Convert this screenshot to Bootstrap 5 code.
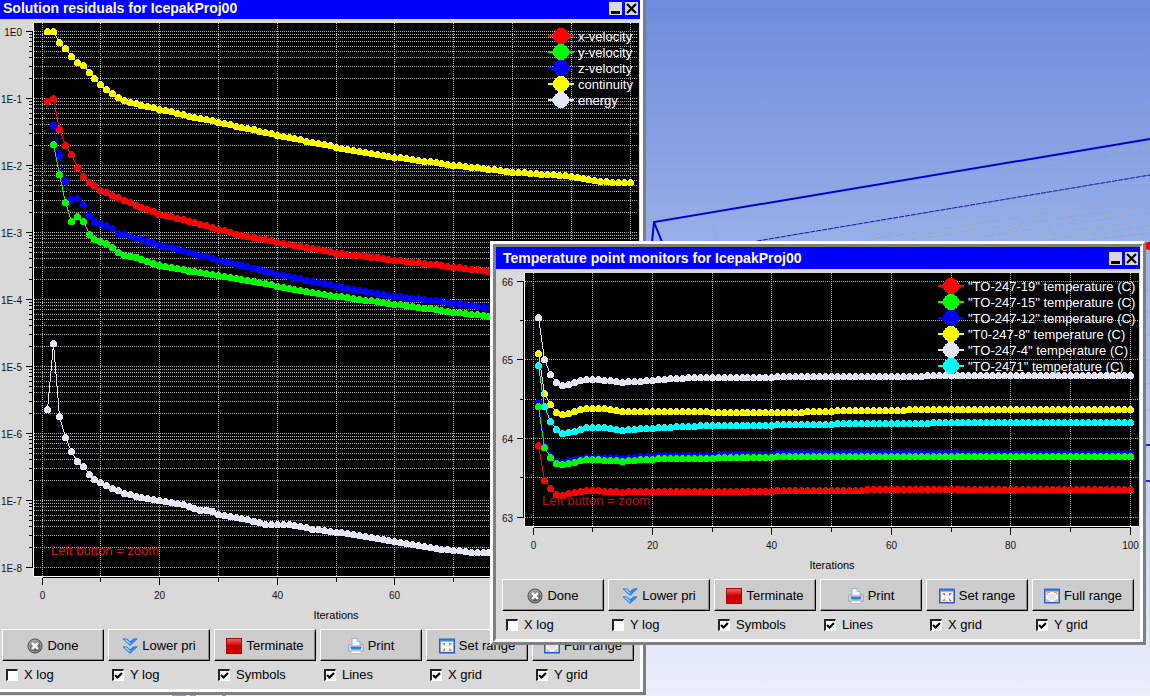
<!DOCTYPE html>
<html lang="en">
<head>
<meta charset="utf-8">
<meta name="viewport" content="width=device-width, initial-scale=1">
<title>Icepak solution monitors</title>
<link rel="stylesheet" href="https://cdn.jsdelivr.net/npm/bootstrap@5.3.0/dist/css/bootstrap.min.css">
<style>
  body { font-family: "Liberation Sans", Arial, sans-serif; font-size: 13px; line-height: 16px; color: #000; }
  .desk { min-height: 100vh; background: linear-gradient(#6c8cdc, #ecf0fb); }
  .desk-scene { inset: 0; }

  /* Raised frame: two nested 3px edges */
  .win { width: 656px; border: 3px solid; border-color: #fff #7f7f7f #7f7f7f #fff; }
  .win-inner { border: 3px solid; border-color: #7f7f7f #fff #fff #7f7f7f; background: #d9d9d9; }
  .win-residuals { left: -10px; top: -9px; }
  .win-temps { left: 490px; top: 241px; }

  .win-title { height: 22px; background: #00f; color: #fff; padding: 0 2px 0 7px; gap: 3px; }
  .win-title h1 { font-size: 14px; line-height: 22px; font-weight: 700; }
  .win-ctl { width: 13px; height: 13px; padding: 0; border: 0; background: #d9d9d9; }

  .tools { padding: 5px 6px 6px; }
  .tool-btn { height: 32px; gap: 4px; padding: 1px 0 0; border-radius: 0; font-size: 13px; line-height: 16px; color: #000;
    background: #ccc; border: 1px solid; border-color: #fff #000 #000 #fff; box-shadow: inset -1px -1px #8a8a8a; }
  .tool-btn:hover { background: #d4d4d4; color: #000; border-color: #fff #000 #000 #fff; }
  .opt { gap: 6px; padding: 6px 0 0 4px; }
  .opt input { appearance: none; margin: 0; width: 12px; height: 12px; background: #fff center / 9px 9px no-repeat;
    border: 1px solid; border-width: 2px 1px 1px 2px; border-color: #222 #fff #fff #222; }
  .opt input:checked { background-image: url("data:image/svg+xml,%3Csvg xmlns='http://www.w3.org/2000/svg' viewBox='0 0 9 9'%3E%3Cpath d='M1 4 3.500 6.500 8 2' fill='none' stroke='%23000' stroke-width='2.200'/%3E%3C/svg%3E"); }

  .plot line, .plot rect, .plot circle, .plot polyline { shape-rendering: crispEdges; }
  .plot .grid { stroke: #b0b0b0; stroke-dasharray: 1 1; }
  .plot .axis { stroke: #000; }
  .plot .tick-text { font: 10px "Liberation Sans", sans-serif; fill: #111; }
  .plot .axis-text { font: 11px "Liberation Sans", sans-serif; fill: #000; }
  .plot .key-text { font: 13px "Liberation Sans", sans-serif; fill: #fff; }
  .plot .hint { font: 13px "Liberation Sans", sans-serif; fill: #d8141e; }
  .win-temps .hint { fill: #b4101a; }
</style>
<script src="https://cdn.jsdelivr.net/npm/bootstrap@5.3.0/dist/js/bootstrap.bundle.min.js"></script>
</head>
<body>
<svg class="position-absolute" width="0" height="0" aria-hidden="true">
  <defs>
    <radialGradient id="gBall" cx=".4" cy=".3" r=".8"><stop offset="0" stop-color="#aaa"/><stop offset="1" stop-color="#3c3c3c"/></radialGradient>
    <linearGradient id="gStop" x2="0" y2="1"><stop offset="0" stop-color="#f06a6a"/><stop offset=".4" stop-color="#d81010"/><stop offset=".45" stop-color="#c00000"/><stop offset="1" stop-color="#e00000"/></linearGradient>
  </defs>
  <symbol id="iDone" viewBox="0 0 16 16"><circle cx="8" cy="8" r="7" fill="url(#gBall)" stroke="#444"/><circle cx="8" cy="8" r="6" fill="none" stroke="#bbb" stroke-width=".7"/><path d="M5 5l6 6M11 5l-6 6" stroke="#fff" stroke-width="2.4"/></symbol>
  <symbol id="iLower" viewBox="0 0 16 16"><g stroke="#2070e0" stroke-width=".8"><path d="M1 .8l4 .2 3 2.8 3.4-2.8 3.8-.2L8 7.400z" fill="#2b8cff"/><path d="M1 8.800l4 .2 3 2.8 3.400-2.800 3.800-.2L8 15.400z" fill="#2b8cff"/></g><path d="M2.500 1.500h2l3.500 3.500v1.200zM2.500 9.500h2l3.500 3.500v1.200z" fill="#c4e2ff"/></symbol>
  <symbol id="iStop" viewBox="0 0 16 16"><rect x=".5" y=".5" width="15" height="15" fill="url(#gStop)" stroke="#a00808"/></symbol>
  <symbol id="iPrint" viewBox="0 0 16 16"><path d="M4 7V.5h5L12 3.500V7" fill="#f2f8ff" stroke="#8fb4d8"/><path d="M9 .5v3h3" fill="#bcd8f4" stroke="#8fb4d8" stroke-width=".7"/><path d="M1 6.500h2v2h10v-2h2l.5 1.500v5H.5V8z" fill="#d8dce2" stroke="#98a0ac" stroke-width=".8"/><path d="M2.500 9h11l-1 2.500h-9z" fill="#1787ea"/><path d="M3 13h10v2.500H3z" fill="#fff" stroke="#a8b0bc" stroke-width=".7"/></symbol>
  <symbol id="iRange" viewBox="0 0 16 16"><rect x=".8" y="1.300" width="14.400" height="13.400" fill="#f6f9ff" stroke="#2458c8" stroke-width="1.500"/><path d="M1 2.500h14" stroke="#3c84f0" stroke-width="2"/></symbol>
  <symbol id="iSet" viewBox="0 0 16 16"><use href="#iRange"/><path d="M3 5h3v3zM13 5h-3v3zM3 13h3v-3zM13 13h-3v-3z" fill="#e07838"/></symbol>
  <symbol id="iFull" viewBox="0 0 16 16"><use href="#iRange"/><path d="M3 7V4.500h3M13 7V4.500h-3M3 11v2h3M13 11v2h-3" fill="none" stroke="#d89878"/><ellipse cx="8" cy="8.800" rx="4" ry="3.200" fill="#e4e4ec"/></symbol>
  <symbol id="iMin" viewBox="0 0 13 13"><path d="M2 10.500h9" stroke="#000" stroke-width="3"/></symbol>
  <symbol id="iClose" viewBox="0 0 13 13"><path d="M2 2l9 9M11 2l-9 9" stroke="#000" stroke-width="2.200"/></symbol>
</svg>

<main class="desk position-relative overflow-hidden">
  <svg class="desk-scene position-absolute w-100 h-100" viewBox="0 0 1150 696" preserveAspectRatio="xMinYMin slice" fill="none" aria-hidden="true">
    <g stroke="#a3a6bd" stroke-opacity=".7">
      <path d="M860 241L1150 198M900 241L1150 206M950 241L1150 213M1000 241L1150 220M1040 241L1150 226M1080 241L1150 233M1000 170L1150 146M712 222l6 19" stroke-dasharray="9 3"/>
      <path d="M1146 270h4M1146 290h4M1146 312h4M1146 335h4M1146 360h4M1146 384h4M1146 410h4"/>
    </g>
    <path d="M652 242l2-20L1150 139M654 222l8 20" stroke="#0000c8" stroke-width="2"/>
    <path d="M757 241L1150 175" stroke="#1414a0" stroke-dasharray="5 1"/>
    <path d="M1146 445h4M1146 481h4" stroke="#2828d0" stroke-width="2"/>
    <circle cx="1149" cy="246" r="4" fill="#f00"/>
    <path d="M172 695h14M190 695h6M222 695h4" stroke="#555"/>
  </svg>

  <section class="win win-residuals position-absolute" aria-labelledby="t1">
    <div class="win-inner">
      <header class="win-title d-flex align-items-center">
        <h1 id="t1" class="m-0 me-auto">Solution residuals for IcepakProj00</h1>
        <button class="win-ctl d-flex" type="button" aria-label="Minimize"><svg width="13" height="13"><use href="#iMin"/></svg></button>
        <button class="win-ctl d-flex" type="button" aria-label="Close"><svg width="13" height="13"><use href="#iClose"/></svg></button>
      </header>
      <svg id="residuals" class="plot d-block w-100" viewBox="-4 19 644 605" role="img" aria-label="Solution residuals"></svg>
      <div class="tools">
        <div class="row row-cols-6 g-1">
          <div class="col"><button type="button" class="btn tool-btn w-100 d-flex align-items-center justify-content-center"><svg width="16" height="16"><use href="#iDone"/></svg>Done</button></div>
          <div class="col"><button type="button" class="btn tool-btn w-100 d-flex align-items-center justify-content-center"><svg width="16" height="16"><use href="#iLower"/></svg>Lower pri</button></div>
          <div class="col"><button type="button" class="btn tool-btn w-100 d-flex align-items-center justify-content-center"><svg width="16" height="16"><use href="#iStop"/></svg>Terminate</button></div>
          <div class="col"><button type="button" class="btn tool-btn w-100 d-flex align-items-center justify-content-center"><svg width="16" height="16"><use href="#iPrint"/></svg>Print</button></div>
          <div class="col"><button type="button" class="btn tool-btn w-100 d-flex align-items-center justify-content-center"><svg width="16" height="16"><use href="#iSet"/></svg>Set range</button></div>
          <div class="col"><button type="button" class="btn tool-btn w-100 d-flex align-items-center justify-content-center"><svg width="16" height="16"><use href="#iFull"/></svg>Full range</button></div>
        </div>
        <div class="row row-cols-6 gx-1">
          <div class="col"><div class="opt d-flex align-items-center"><input type="checkbox" id="r1"><label for="r1">X log</label></div></div>
          <div class="col"><div class="opt d-flex align-items-center"><input type="checkbox" id="r2" checked><label for="r2">Y log</label></div></div>
          <div class="col"><div class="opt d-flex align-items-center"><input type="checkbox" id="r3" checked><label for="r3">Symbols</label></div></div>
          <div class="col"><div class="opt d-flex align-items-center"><input type="checkbox" id="r4" checked><label for="r4">Lines</label></div></div>
          <div class="col"><div class="opt d-flex align-items-center"><input type="checkbox" id="r5" checked><label for="r5">X grid</label></div></div>
          <div class="col"><div class="opt d-flex align-items-center"><input type="checkbox" id="r6" checked><label for="r6">Y grid</label></div></div>
        </div>
      </div>
    </div>
  </section>

  <section class="win win-temps position-absolute" aria-labelledby="t2">
    <div class="win-inner">
      <header class="win-title d-flex align-items-center">
        <h1 id="t2" class="m-0 me-auto">Temperature point monitors for IcepakProj00</h1>
        <button class="win-ctl d-flex" type="button" aria-label="Minimize"><svg width="13" height="13"><use href="#iMin"/></svg></button>
        <button class="win-ctl d-flex" type="button" aria-label="Close"><svg width="13" height="13"><use href="#iClose"/></svg></button>
      </header>
      <svg id="temps" class="plot d-block w-100" viewBox="496 269 644 305" role="img" aria-label="Temperature point monitors"></svg>
      <div class="tools">
        <div class="row row-cols-6 g-1">
          <div class="col"><button type="button" class="btn tool-btn w-100 d-flex align-items-center justify-content-center"><svg width="16" height="16"><use href="#iDone"/></svg>Done</button></div>
          <div class="col"><button type="button" class="btn tool-btn w-100 d-flex align-items-center justify-content-center"><svg width="16" height="16"><use href="#iLower"/></svg>Lower pri</button></div>
          <div class="col"><button type="button" class="btn tool-btn w-100 d-flex align-items-center justify-content-center"><svg width="16" height="16"><use href="#iStop"/></svg>Terminate</button></div>
          <div class="col"><button type="button" class="btn tool-btn w-100 d-flex align-items-center justify-content-center"><svg width="16" height="16"><use href="#iPrint"/></svg>Print</button></div>
          <div class="col"><button type="button" class="btn tool-btn w-100 d-flex align-items-center justify-content-center"><svg width="16" height="16"><use href="#iSet"/></svg>Set range</button></div>
          <div class="col"><button type="button" class="btn tool-btn w-100 d-flex align-items-center justify-content-center"><svg width="16" height="16"><use href="#iFull"/></svg>Full range</button></div>
        </div>
        <div class="row row-cols-6 gx-1">
          <div class="col"><div class="opt d-flex align-items-center"><input type="checkbox" id="m1"><label for="m1">X log</label></div></div>
          <div class="col"><div class="opt d-flex align-items-center"><input type="checkbox" id="m2"><label for="m2">Y log</label></div></div>
          <div class="col"><div class="opt d-flex align-items-center"><input type="checkbox" id="m3" checked><label for="m3">Symbols</label></div></div>
          <div class="col"><div class="opt d-flex align-items-center"><input type="checkbox" id="m4" checked><label for="m4">Lines</label></div></div>
          <div class="col"><div class="opt d-flex align-items-center"><input type="checkbox" id="m5" checked><label for="m5">X grid</label></div></div>
          <div class="col"><div class="opt d-flex align-items-center"><input type="checkbox" id="m6" checked><label for="m6">Y grid</label></div></div>
        </div>
      </div>
    </div>
  </section>
</main>

<script>
  const esc = s => s.replace(/"/g, '&quot;');
  const half = v => Math.floor(v) + .5;
  const line = (x1, y1, x2, y2, c) => `<line class="${c}" x1="${x1}" y1="${y1}" x2="${x2}" y2="${y2}"/>`;

  // Fill in every iteration between the key points [iteration, y, iteration, y, ...]
  function points(keys, x) {
    const out = [];
    for (let k = 0; k + 3 < keys.length; k += 2) {
      const [a, ya, b, yb] = keys.slice(k, k + 4);
      for (let i = a; i < b; i++) out.push([half(x(i)), half(ya + (yb - ya) * (i - a) / (b - a))]);
    }
    out.push([half(x(keys.at(-2))), half(keys.at(-1))]);
    return out;
  }

  function draw(id, c) {
    const { left, top, right, bottom } = c;
    let s = `<rect x="${left - 1}" y="${top}" width="${right - left + 1}" height="${bottom - top + 1}" fill="#fff"/>
             <rect x="${left}" y="${top}" width="${right - left}" height="${bottom - top}" fill="#000"/>`;
    const ax = left - 1.5, ay = bottom + 1.5;
    for (const t of c.yTicks) {
      const y = half(t.y);
      s += line(left, y, right - 1, y, 'grid') + line(ax - (t.label ? 7 : 4), y, ax, y, 'axis');
      if (t.label) s += `<text class="tick-text" text-anchor="end" x="${left - 12}" y="${y + 4}">${t.label}</text>`;
    }
    for (let i = 0; i <= 100; i += 10) {
      const x = half(c.x(i)), major = i % 20 === 0;
      s += line(x, top, x, bottom, 'grid') + line(x, ay, x, ay + (major ? 7 : 4), 'axis');
      if (major) s += `<text class="tick-text" text-anchor="middle" x="${x}" y="${bottom + 23}">${i}</text>`;
    }
    const ys = c.yTicks.map(t => half(t.y));
    s += line(ax, Math.min(...ys), ax, Math.max(...ys), 'axis') + line(half(c.x(0)), ay, half(c.x(100)), ay, 'axis');
    s += `<text class="axis-text" text-anchor="middle" x="${Math.round(c.x(50))}" y="${bottom + 43}">Iterations</text>`;
    for (const n of c.order) {
      const [, color, keys] = c.series[n], p = points(keys, c.x);
      s += `<polyline fill="none" stroke="${color}" points="${p.join(' ')}"/>`;
      s += p.map(([x, y]) => `<circle cx="${x}" cy="${y}" r="3.5" fill="${color}"/>`).join('');
    }
    s += `<text class="hint" x="${c.hint[0]}" y="${c.hint[1]}">Left button = zoom</text>`;
    c.series.forEach(([name, color], n) => {
      const x = c.key, y = top + 13 + n * 16;
      s += `<rect x="${x - 13}" y="${y - 1}" width="26" height="2" fill="${color}"/><circle cx="${x}" cy="${y}" r="8" fill="${color}"/>
            <text class="key-text" x="${x + 17}" y="${y + 5}">${esc(name)}</text>`;
    });
    document.getElementById(id).innerHTML = s;
  }

  const logTicks = [];
  for (let d = 0; d <= 8; d++) {
    const y = 31.3 + d * 67;
    logTicks.push({ y, label: d ? '1E-' + d : '1E0' });
    if (d < 8) for (let m = 2; m <= 9; m++) logTicks.push({ y: y - 67 * Math.log10(m / 10) });
  }

  draw('residuals', {
    left: 34, top: 23, right: 639, bottom: 576, key: 561, hint: [51, 555], yTicks: logTicks, order: [0, 2, 1, 3, 4],
    x: i => 42 + i * 5.881,
    series: [
      ['x-velocity', '#ff0000', [1,101,2,98,3,129,4,145,5,154,6,167,7,176,8,182,9,185,10,190,12,195,14,200,16,205,18,209,20,214,25,221,30,229,33,234,40,242,50,253,60,260,70,267,80,274,100,286]],
      ['y-velocity', '#00ff00', [2,144,3,174,4,202,5,221,6,216,7,221,8,234,9,239,10,241,11,243,12,247,13,252,14,255,16,257,18,261,20,265,25,271,30,275,33,278,40,286,50,296,60,304,70,312,80,319,100,330]],
      ['z-velocity', '#0000ff', [2,125,3,155,4,181,5,199,6,198,7,204,8,215,9,221,10,223,12,228,13,233,20,245,25,252,30,260,33,264,40,274,50,286,60,296,70,303,80,311,100,323]],
      ['continuity', '#ffff00', [1,31,2,31,3,42,4,48,5,56,6,62,7,65,8,72,9,78,10,84,11,89,12,93,13,97,14,100,15,102,17,105,20,109,25,116,30,122,33,126,40,135,50,147,60,157,70,165,80,172,90,176,95,181,97,182,100,182]],
      ['energy', '#e6e6fa', [1,409,2,343,3,416,4,437,5,451,6,461,7,466,8,474,9,479,10,482,11,485,12,488,14,493,16,496,20,500,24,504,27,510,29,511,30,514,33,517,38,524,42,524,46,529,50,532,60,541,68,549,73,552,80,554,100,560]]
    ]
  });

  const tempTicks = [];
  for (let n = 0; n <= 6; n++) tempTicks.push({ y: 281.3 + n * 39.3, label: n % 2 ? '' : String(66 - n / 2) });

  draw('temps', {
    left: 525, top: 273, right: 1139, bottom: 526, key: 951, hint: [542, 505], yTicks: tempTicks, order: [0, 2, 1, 3, 4, 5],
    x: i => 533 + i * 5.972,
    series: [
      ['"TO-247-19" temperature (C)', '#ff0000', [1,445,2,480,3,488,4,494,5,495,7,492,9,490,12,491,15,492,20,491,40,491,55,490,70,489,100,489]],
      ['"TO-247-15" temperature (C)', '#00ff00', [1,406,2,447,3,457,4,463,5,464,7,462,9,459,12,460,15,461,20,459,30,458,40,457,66,456,100,456]],
      ['"TO-247-12" temperature (C)', '#0000ff', [1,402,2,445,3,455,4,461,5,462,7,459,9,457,12,457,15,458,20,456,30,455,40,454,66,453,100,453]],
      ['"T0-247-8" temperature (C)', '#ffff00', [1,353,2,393,3,404,4,412,5,414,6,413,8,409,10,408,12,408,15,411,20,411,30,412,45,412,50,411,62,410,66,409,100,409]],
      ['"TO-247-4" temperature (C)', '#e6e6fa', [1,317,2,359,3,374,4,382,5,385,6,384,7,382,9,379,10,379,12,380,15,382,18,381,20,380,25,378,40,377,65,376,80,375,100,375]],
      ['"TO-2471" temperature (C)', '#00ffff', [1,365,2,406,3,421,4,429,5,433,7,431,9,427,12,427,15,430,20,428,27,426,40,425,50,424,66,423,84,422,100,422]]
    ]
  });
</script>
</body>
</html>
